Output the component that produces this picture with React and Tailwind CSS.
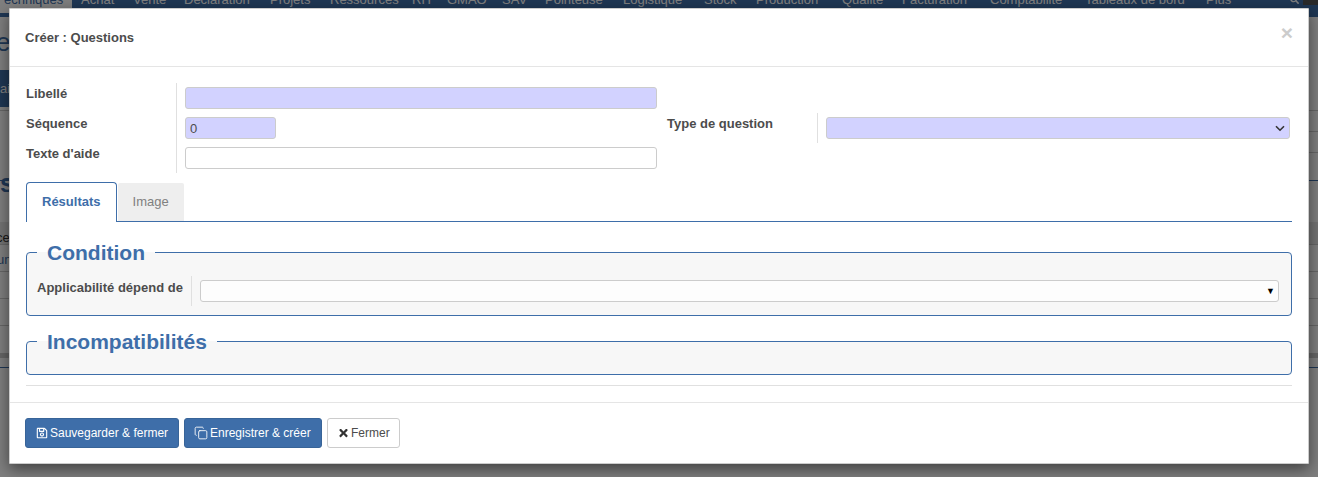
import React from 'react';
import { FaRegSave, FaTimes, FaSearch } from 'react-icons/fa';
import { Copy } from 'lucide-react';

const menu = [
  ['Achat', 'w-[35px]'],
  ['Vente', 'w-[34px]'],
  ['Déclaration', 'w-[69px]'],
  ['Projets', 'w-[43px]'],
  ['Ressources', 'w-[65px]'],
  ['RH', 'w-[18px]'],
  ['GMAO', 'w-[38px]'],
  ['SAV', 'w-[26px]'],
  ['Pointeuse', 'w-[61px]'],
  ['Logistique', 'w-[64px]'],
  ['Stock', 'w-[35px]'],
  ['Production', 'w-[69px]'],
  ['Qualité', 'w-[43px]'],
  ['Facturation', 'w-[71px]'],
  ['Comptabilité', 'w-[78px]'],
  ['Tableaux de bord', 'w-[104px]'],
  ['Plus', 'w-[27px]'],
];

const Backdrop = () => (
  <div className="h-[477px] bg-white text-[13px]">
    <div className="flex h-[17px] items-start overflow-hidden bg-[#3e6ea9] text-white">
      <div className="h-[13px] w-[72px] shrink-0 overflow-hidden whitespace-nowrap bg-white pl-[4px] leading-[0px] text-[#3e6ea9]">
        echniques
      </div>
      <div className="ml-[9px] flex gap-[17px] leading-[0px]">
        {menu.map(([name, w]) => (
          <span key={name} className={`${w} whitespace-nowrap`}>{name}</span>
        ))}
      </div>
      <FaSearch className="ml-[57px] mt-[-5px] shrink-0 text-[9px]" />
      <div className="ml-[4px] h-[5px] flex-1 bg-[#555]" />
    </div>
    <div className="h-[53px] pt-[10px] text-[26px] leading-[30px] text-[#3e6ea9]">
      <span className="ml-[-4px]">e</span>
    </div>
    <div className="flex h-[37px] w-[300px] items-center bg-[#3e6ea9] text-white">
      <span>ai</span>
    </div>
    <div className="mt-[3px] h-[21px] border-t border-[#ccc]" />
    <div className="ml-[1200px] h-[21px] border-t border-[#ccc]" />
    <div className="ml-[1200px] h-[28px] border-t border-[#ccc]" />
    <div className="relative h-[42px] border-t border-[#3e6ea9]">
      <span className="absolute left-0 top-[-13px] text-[26px] font-bold leading-[30px] text-[#3e6ea9]">s</span>
    </div>
    <div className="h-[23px] border-b border-[#ccc] bg-[#e8e8e8] pt-[5px] leading-[22px] text-[#333]">
      <span className="ml-[-4px]">ce</span>
    </div>
    <div className="h-[27px] border-b border-[#ccc] pt-[4px] leading-[22px] text-[#3e6ea9]">
      <span className="ml-[-3px]">un</span>
    </div>
    <div className="h-[27px] border-b border-[#ccc]" />
    <div className="h-[27px] border-b border-[#ccc]" />
    <div className="mt-[27px] h-[5px] bg-[#ccc]" />
    <div className="mt-[9px] h-px bg-[#3e6ea9]" />
  </div>
);

const Field = ({ label, children, labelClass = 'w-[151px] pt-px' }) => (
  <div className="flex h-[30px]">
    <label className={`${labelClass} shrink-0 border-r border-[#e0e0e0] font-bold leading-[19px] text-[#4c4c4c]`}>
      {label}
    </label>
    <div className="flex min-w-0 flex-1 items-center pl-2">{children}</div>
  </div>
);

const inputBase = 'block h-[22px] rounded-[3px] border border-[#ccc] px-1 text-[13px] text-[#4c4c4c] outline-none';

const SelectBox = ({ tone, children }) => (
  <div className={`flex h-[22px] w-full items-center justify-end rounded-[3px] border border-[#ccc] ${tone}`}>
    {children}
  </div>
);

const Legend = ({ children }) => (
  <legend className="ml-[10px] px-[10px] text-[21px] font-bold leading-[25px] text-[#3e6ea9]">
    {children}
  </legend>
);

const Tabs = () => (
  <div className="mt-[9px] flex h-[40px] border-b border-[#3e6ea9]">
    <div className="h-[40px] rounded-t-[4px] border border-b-0 border-[#3e6ea9] bg-white px-[15px] font-bold leading-[37px] text-[#3e6ea9]">
      Résultats
    </div>
    <div className="ml-px mt-px h-[38px] rounded-t-[2px] bg-[#eeeeee] px-[15px] leading-[38px] text-[#808080]">
      Image
    </div>
  </div>
);

const Modal = () => (
  <div className="absolute left-[9px] top-[8px] h-[456px] w-[1300px] rounded-[1px] border border-black/20 bg-white font-['Liberation_Sans',Arial,sans-serif] text-[13px] text-[#4c4c4c] shadow-[0_5px_15px_rgba(0,0,0,0.5)]">
    <div className="flex h-[58px] items-start justify-between border-b border-[#e5e5e5] px-[15px]">
      <h4 className="pt-[19px] text-[13px] font-bold leading-[19px]">Créer : Questions</h4>
      <span className="pt-[11px] text-[21px] font-bold leading-[25px] text-[#cccccc]">×</span>
    </div>

    <div className="px-4">
      <div className="mt-4 flex gap-[10px]">
        <div className="w-[631px] shrink-0">
          <Field label="Libellé">
            <input readOnly className={`${inputBase} w-full bg-[#d2d2ff]`} />
          </Field>
          <Field label="Séquence">
            <input readOnly value="0" className={`${inputBase} w-[91px] bg-[#d2d2ff]`} />
          </Field>
          <Field label="Texte d'aide">
            <input readOnly className={`${inputBase} w-full bg-white`} />
          </Field>
        </div>
        <div className="mt-[30px] min-w-0 flex-1 pr-[2px]">
          <Field label="Type de question">
            <SelectBox tone="bg-[#d2d2ff]">
              <svg viewBox="0 0 10 7" className="mr-[4px] h-[7px] w-[10px]" fill="none" stroke="#333" strokeWidth="1.6">
                <path d="M1 1.2 5 5.2 9 1.2" />
              </svg>
            </SelectBox>
          </Field>
        </div>
      </div>

      <Tabs />

      <fieldset className="mt-[18px] rounded-[4px] border border-[#3e6ea9] bg-[#f7f7f7] pb-[9px]">
        <Legend>Condition</Legend>
        <div className="mt-[11px] pl-[10px] pr-[12px]">
          <Field label="Applicabilité dépend de" labelClass="w-[155px] pt-[2px]">
            <SelectBox tone="bg-[#fdfdfd]">
              <span className="mr-[3px] text-[9px] leading-none text-black">▼</span>
            </SelectBox>
          </Field>
        </div>
      </fieldset>

      <fieldset className="mt-[13px] h-[46px] rounded-[4px] border border-[#3e6ea9] bg-[#f7f7f7]">
        <Legend>Incompatibilités</Legend>
      </fieldset>

      <div className="mt-[10px] border-t border-[#e0e0e0]" />
    </div>

    <div className="mt-4 flex gap-[5px] border-t border-[#e5e5e5] px-[15px] pt-[15px] text-xs">
      <button className="flex h-[30px] w-[154px] items-center gap-[2px] rounded-[3px] border border-[#386498] bg-[#3e6ea9] pl-[10px] text-white">
        <FaRegSave className="h-[12px] w-[12px]" />
        Sauvegarder &amp; fermer
      </button>
      <button className="flex h-[30px] w-[138px] items-center gap-[2px] rounded-[3px] border border-[#386498] bg-[#3e6ea9] pl-[9px] text-white">
        <Copy className="h-[14px] w-[14px]" strokeWidth={1.5} />
        Enregistrer &amp; créer
      </button>
      <button className="flex h-[30px] w-[73px] items-center gap-[2px] rounded-[3px] border border-[#ccc] bg-white pl-[10px] text-[#4c4c4c]">
        <FaTimes className="h-[12px] w-[11px] text-[#333]" />
        Fermer
      </button>
    </div>
  </div>
);

export default function App() {
  return (
    <div className="relative h-[477px] w-[1318px] overflow-hidden font-['Liberation_Sans',Arial,sans-serif]">
      <Backdrop />
      <div className="absolute inset-0 bg-black/50" />
      <Modal />
    </div>
  );
}
